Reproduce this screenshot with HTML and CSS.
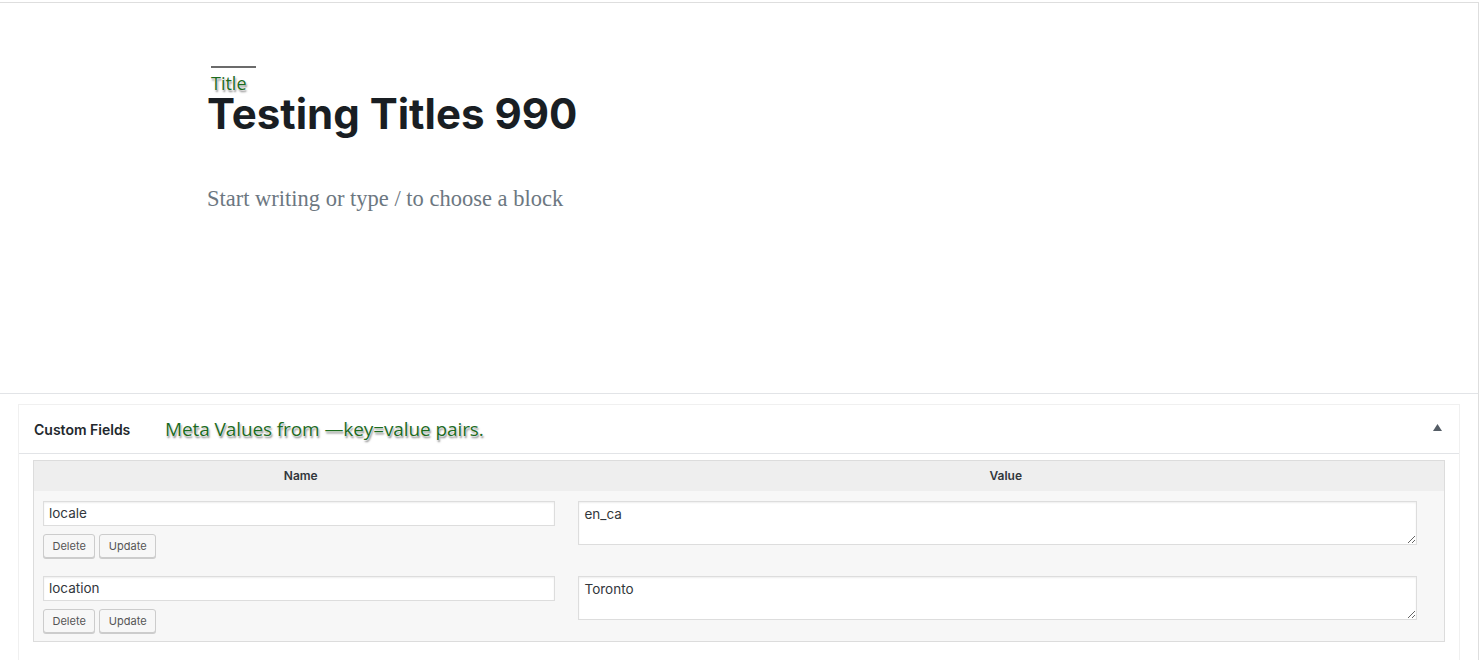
FILE: index.html
```html
<!DOCTYPE html>
<html lang="en">
<head>
  <meta charset="UTF-8">
  <meta name="viewport" content="width=device-width, initial-scale=1.0">
  <title>Edit Post</title>
  <link rel="stylesheet" href="styles.css">
</head>
<body>
  <div class="editor">
    <!-- Block editor canvas -->
    <div class="visual-editor">
      <div class="writing-flow">
        <div class="callout callout-title">
          <span class="callout-rule"></span>
          <span class="note">Title</span>
        </div>
        <h1 class="post-title">Testing Titles 990</h1>
        <p class="block-placeholder">Start writing or type / to choose a block</p>
      </div>
    </div>

    <!-- Meta boxes -->
    <div class="meta-boxes">
      <div class="postbox">
        <div class="postbox-header">
          <h2 class="postbox-title">Custom Fields</h2>
          <span class="note note-meta">Meta Values from —key=value pairs.</span>
          <button class="handle-toggle" title="Toggle panel">
            <svg width="9" height="7" viewBox="0 0 9 7"><polygon points="4.5,0 9,7 0,7" fill="#555d66"/></svg>
          </button>
        </div>
        <div class="inside">
          <table class="list-table">
            <colgroup>
              <col class="col-name">
              <col class="col-value">
            </colgroup>
            <thead>
              <tr>
                <th>Name</th>
                <th>Value</th>
              </tr>
            </thead>
            <tbody>
              <tr>
                <td class="cell-name">
                  <input type="text" class="meta-key" value="locale">
                  <div class="actions">
                    <button class="button-small">Delete</button>
                    <button class="button-small">Update</button>
                  </div>
                </td>
                <td class="cell-value">
                  <textarea class="meta-value">en_ca</textarea>
                </td>
              </tr>
              <tr>
                <td class="cell-name">
                  <input type="text" class="meta-key" value="location">
                  <div class="actions">
                    <button class="button-small">Delete</button>
                    <button class="button-small">Update</button>
                  </div>
                </td>
                <td class="cell-value">
                  <textarea class="meta-value">Toronto</textarea>
                </td>
              </tr>
            </tbody>
          </table>
        </div>
      </div>
    </div>
  </div>
</body>
</html>
```

FILE: styles.css
```css
/* Base */
* {
  margin: 0;
  padding: 0;
  box-sizing: border-box;
}

body {
  font-family: Inter, "Liberation Sans", sans-serif;
  color: #23282d;
  background: #fff;
}

.editor {
  width: 1479px;
  margin-top: 2px;
  border-top: 1px solid #dedede;
  border-right: 1px solid #dedede;
}

/* Canvas */
.visual-editor {
  height: 391px;
  border-bottom: 1px solid #e2e4e7;
  padding: 89px 0 0 207px;
}

.writing-flow {
  position: relative;
}

.post-title {
  font-family: Inter, sans-serif;
  font-size: 42px;
  font-weight: 700;
  line-height: 44px;
  color: #191e23;
}

.block-placeholder {
  margin-top: 47px;
  font-family: "Liberation Serif", serif;
  font-size: 22.5px;
  line-height: 31px;
  color: #6c7781;
}

/* Annotations */
.note {
  font-family: "Open Sans", sans-serif;
  color: #1d6b1f;
  text-shadow: 0 0 2px #fff, 0 0 2px #fff, 1px 2px 2px rgba(0, 0, 0, 0.55);
}

.callout-title {
  position: absolute;
  top: -26px;
  left: 4px;
  display: flex;
  flex-direction: column;
}

.callout-rule {
  width: 45px;
  height: 2px;
  background: #6b6b6b;
}

.callout-title .note {
  font-size: 18px;
  line-height: 16px;
  margin-top: 7px;
}

/* Meta boxes */
.meta-boxes {
  padding: 10px 18px 0;
}

.postbox {
  border: 1px solid #f0f0f0;
  border-bottom: none;
  padding-bottom: 20px;
}

.postbox-header {
  display: flex;
  align-items: center;
  height: 49px;
  padding: 0 17px 0 15px;
  border-bottom: 1px solid #e2e4e7;
}

.postbox-title {
  font-size: 14px;
  font-weight: 600;
  color: #23282d;
  width: 131px;
}

.note-meta {
  font-size: 19px;
  letter-spacing: -0.1px;
  flex: 1;
}

.handle-toggle {
  background: none;
  border: none;
  display: flex;
  margin-top: -3px;
}

.inside {
  padding: 6px 14px 0;
}

/* Custom fields table */
.list-table {
  width: 100%;
  table-layout: fixed;
  border-collapse: collapse;
  border: 1px solid #dcdcdc;
  background: #f7f7f7;
}

.col-name {
  width: 534px;
}

.list-table th {
  height: 30px;
  background: #eee;
  font-size: 12px;
  font-weight: 600;
  color: #32373c;
  text-align: center;
}

.list-table td {
  vertical-align: top;
  padding: 10px 0 8px;
}

.cell-name {
  padding-left: 9px !important;
  padding-right: 13px !important;
}

.cell-value {
  padding-left: 10px !important;
  padding-right: 27px !important;
}

.meta-key {
  display: block;
  width: 100%;
  height: 25px;
  padding: 0 5px;
  border: 1px solid #ddd;
  box-shadow: inset 0 1px 2px rgba(0, 0, 0, 0.07);
  font-family: inherit;
  font-size: 13.5px;
  color: #32373c;
  background: #fff;
}

.meta-value {
  display: block;
  width: 100%;
  height: 44px;
  padding: 3px 6px;
  border: 1px solid #ddd;
  box-shadow: inset 0 1px 2px rgba(0, 0, 0, 0.07);
  font-family: inherit;
  font-size: 13.5px;
  line-height: 18px;
  color: #32373c;
  background: #fff;
}

.actions {
  display: flex;
  gap: 4px;
  margin-top: 8px;
}

.button-small {
  height: 24px;
  padding: 0 8.5px;
  border: 1px solid #ccc;
  border-radius: 3px;
  background: #f7f7f7;
  box-shadow: 0 1px 0 #ccc;
  font-family: inherit;
  font-size: 11px;
  color: #555;
  cursor: pointer;
}
```
